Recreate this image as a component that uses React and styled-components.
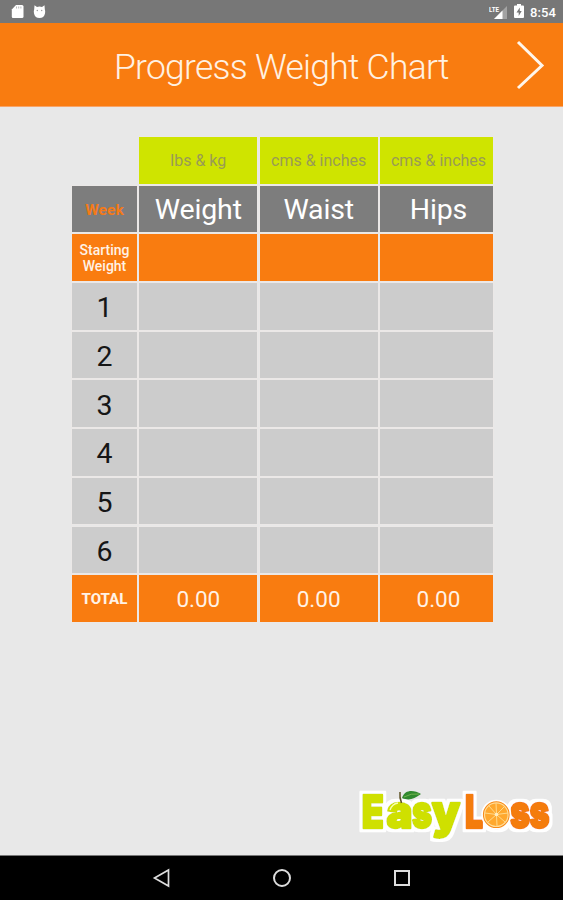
import React from "react";
import styled, { createGlobalStyle } from "styled-components";

const Global = createGlobalStyle`
  * { box-sizing: border-box; }
  body { margin: 0; background: #e8e8e8; font-family: Roboto, "Liberation Sans", sans-serif; }
`;

const Screen = styled.div`
  width: 563px;
  height: 900px;
  display: flex;
  flex-direction: column;
  background: #e8e8e8;
  overflow: hidden;
`;

const StatusBar = styled.div`
  height: 23px;
  flex: none;
  display: flex;
  align-items: center;
  justify-content: space-between;
  padding: 0 7px 0 11px;
  background: #777;
  color: #fff;
`;

const StatusGroup = styled.div`
  display: flex;
  align-items: center;
  gap: ${(p) => p.$gap}px;
`;

const Clock = styled.span`
  font-size: 13px;
  line-height: 23px;
  font-weight: 500;
  padding-top: 2px;
  letter-spacing: 0.1px;
`;

const Header = styled.header`
  height: 84px;
  flex: none;
  display: grid;
  grid-template-columns: 1fr auto 1fr;
  align-items: center;
  background: #f97c10;
  border-bottom: 1px solid #f8a468;
`;

const Title = styled.h1`
  grid-column: 2;
  margin: 5px 0 0;
  color: #fff1e2;
  font-size: 35.5px;
  letter-spacing: -0.75px;
  line-height: 42px;
  font-weight: 300;
  white-space: nowrap;
  width: 335px;
`;

const NextButton = styled.button`
  justify-self: end;
  margin-right: 17px;
  padding: 0;
  border: 0;
  background: none;
  display: flex;
`;

const Main = styled.main`
  flex: 1;
  display: flex;
  flex-direction: column;
  justify-content: space-between;
  padding: 30px 0 6px 72px;
`;

const Table = styled.div`
  display: grid;
  grid-template-columns: 65px 118px 118px 113px;
  grid-template-rows: repeat(10, 46.6px);
  column-gap: 2.33px;
  row-gap: 2.1px;
`;

const tones = {
  blank: "transparent",
  lime: "#cfe400",
  gray: "#7d7d7d",
  orange: "#f97c10",
  light: "#cccccc",
};

const Cell = styled.div`
  display: flex;
  align-items: center;
  justify-content: center;
  text-align: center;
  overflow: hidden;
  white-space: nowrap;
  background: ${(p) => tones[p.$tone]};
  box-shadow: ${(p) => (p.$tone === "blank" ? "none" : "0 0 0 1px #ebe8e7")};
  padding-left: ${(p) => (p.$last ? 4 : 0)}px;
`;

const Unit = styled.span`
  font-size: 16px;
  color: #999b55;
`;

const Heading = styled.span`
  font-size: 28.5px;
  letter-spacing: -0.15px;
  color: #fff;
  padding-top: 1px;
`;

const WeekLabel = styled.span`
  font-size: 15.5px;
  letter-spacing: 0.1px;
  font-weight: 700;
  color: #f47a18;
  padding-top: 2px;
`;

const StartLabel = styled.span`
  width: 60px;
  font-size: 14px;
  line-height: 16px;
  font-weight: 500;
  color: #fff2e6;
  white-space: normal;
`;

const WeekNumber = styled.span`
  font-size: 28.5px;
  color: #161616;
  padding-top: 3px;
`;

const TotalLabel = styled.span`
  font-size: 15px;
  font-weight: 800;
  color: #fff2e6;
  padding-top: 2px;
`;

const TotalValue = styled.span`
  font-size: 22.5px;
  color: #fff2e6;
  padding-top: 2px;
`;

const Brand = styled.div`
  align-self: flex-end;
  display: flex;
`;

const NavBar = styled.nav`
  height: 45px;
  flex: none;
  display: flex;
  justify-content: center;
  align-items: center;
  gap: 100px;
  border-top: 1px solid #777;
  background: #000;
`;

const NavButton = styled.button`
  width: 20px;
  height: 20px;
  padding: 0;
  border: 0;
  background: none;
  display: flex;
`;

const columns = [
  { unit: "lbs & kg", name: "Weight" },
  { unit: "cms & inches", name: "Waist" },
  { unit: "cms & inches", name: "Hips" },
];
const weeks = [1, 2, 3, 4, 5, 6];

function Row({ tone, labelTone = tone, label, render }) {
  return (
    <>
      <Cell $tone={labelTone}>{label}</Cell>
      {columns.map((column, i) => (
        <Cell key={i} $tone={tone} $last={i === 2}>
          {render ? render(column) : null}
        </Cell>
      ))}
    </>
  );
}

const LETTERS = [
  { c: "E", x: 5.8, len: 22, size: 46, lime: true },
  { c: "a", x: 30.5, len: 26, size: 46, lime: true },
  { c: "s", x: 56, len: 20, size: 46, lime: true },
  { c: "y", x: 76, len: 28, size: 46, lime: true },
  { c: "L", x: 109, len: 18, size: 46 },
  { c: "o", x: 129, len: 23, size: 40 },
  { c: "s", x: 154, len: 20, size: 46 },
  { c: "s", x: 173.5, len: 20, size: 46 },
];

function LogoLetter({ l }) {
  const color = l.lime ? "#cfe000" : "#f47b10";
  return (
    <text
      x={l.x}
      y="44.5"
      fontFamily="Inter, sans-serif"
      fontWeight="900"
      fontSize={l.size}
      textLength={l.len}
      lengthAdjust="spacingAndGlyphs"
      fill={color}
      stroke={color}
      strokeWidth="2.5"
      strokeLinejoin="round"
    >
      {l.c}
    </text>
  );
}

function Logo() {
  return (
    <svg width="207" height="66" viewBox="0 0 207 66" role="img" aria-label="EasyLoss">
      <defs>
        <filter id="halo" x="-5%" y="-15%" width="110%" height="130%">
          <feMorphology in="SourceAlpha" operator="dilate" radius="3" result="grown" />
          <feGaussianBlur in="grown" stdDeviation="0.6" result="soft" />
          <feFlood floodColor="#fff" />
          <feComposite in2="soft" operator="in" result="edge" />
          <feMerge>
            <feMergeNode in="edge" />
            <feMergeNode in="SourceGraphic" />
          </feMerge>
        </filter>
      </defs>
      <g filter="url(#halo)">
        {LETTERS.map((l, i) => <LogoLetter key={i} l={l} />)}
      </g>
      <circle cx="140.3" cy="31.7" r="14.2" fill="#f98a16" stroke="#fff" strokeWidth="1.6" />
      <circle cx="140.3" cy="31.7" r="11.8" fill="#ffa82e" stroke="#ffdc98" strokeWidth="1.2" />
      <path
        d="M140.5 31.5 L140 20 M140.5 31.5 L149 23 M140.5 31.5 L152 30 M140.5 31.5 L149 39 M140.5 31.5 L141 43 M140.5 31.5 L132 39 M140.5 31.5 L129 30 M140.5 31.5 L133 23"
        stroke="#ffd98a"
        strokeWidth="1"
      />
      <circle cx="140.5" cy="31.5" r="1.8" fill="#ffedc0" />
      <path d="M45.5 20 C44 16 43.5 13 44 9" fill="none" stroke="#5d5124" strokeWidth="1.5" />
      <path d="M46 15 C49 6 58 7 65 11 C58 16 53 18 46 15Z" fill="#31892f" />
      <path d="M48 14 Q55 10 63 11" fill="none" stroke="#83bf55" strokeWidth="0.8" />
      <path d="M34 27 Q36 21 42 20" fill="none" stroke="#f8ffb5" strokeWidth="1.3" />
    </svg>
  );
}

export default function App() {
  return (
    <Screen>
      <Global />
      <StatusBar>
        <StatusGroup $gap={9}>
          <svg width="13" height="15" viewBox="0 0 13 15">
            <path d="M5 1h6q1.5 0 1.5 1.5v10q0 1.5-1.5 1.5H2Q.8 14 .8 12.5V5.5Z" fill="#fff" />
            <path d="M5.5 2.5v2M7.7 2.5v2M9.9 2.5v2" stroke="#bbb" strokeWidth="1" />
          </svg>
          <svg width="13" height="15" viewBox="0 0 13 15">
            <path d="M1.5 1.2 4 3Q6.5 2 9 3l2.5-1.8.3 4Q12.5 7 12 9.5 11 14 6.5 14T1 9.5Q.5 7 1.2 5.2Z" fill="#fff" />
            <circle cx="4.3" cy="6.5" r=".7" fill="#999" />
            <circle cx="8.7" cy="6.5" r=".7" fill="#999" />
          </svg>
        </StatusGroup>
        <StatusGroup $gap={6}>
          <svg width="19" height="16" viewBox="0 0 19 16">
            <path d="M18 2v13H5Z" fill="#a3a3a3" />
            <path d="M13.5 6.5V15H5Z" fill="#fff" />
            <text x="0" y="7.5" fontSize="7" fontWeight="700" textLength="10" lengthAdjust="spacingAndGlyphs" fill="#fff" fontFamily="Roboto, sans-serif">LTE</text>
          </svg>
          <svg width="10" height="15" viewBox="0 0 10 15">
            <path d="M3 0h4v1.5h2q1 0 1 1V13q0 1-1 1H1q-1 0-1-1V2.5q0-1 1-1h2Z" fill="#fff" />
            <path d="M5.8 3.5 2.5 8.5h2.2v3.5L7.7 7H5.8Z" fill="#777" />
          </svg>
          <Clock>8:54</Clock>
        </StatusGroup>
      </StatusBar>
      <Header>
        <Title>Progress Weight Chart</Title>
        <NextButton aria-label="Next">
          <svg width="30" height="50" viewBox="0 0 30 50">
            <path d="M2 2 26 25.5 2 48" fill="none" stroke="#fff6ec" strokeWidth="3" />
          </svg>
        </NextButton>
      </Header>
      <Main>
        <Table>
          <Row tone="lime" labelTone="blank" render={(c) => <Unit>{c.unit}</Unit>} />
          <Row tone="gray" label={<WeekLabel>Week</WeekLabel>} render={(c) => <Heading>{c.name}</Heading>} />
          <Row tone="orange" label={<StartLabel>Starting Weight</StartLabel>} />
          {weeks.map((n) => (
            <Row key={n} tone="light" label={<WeekNumber>{n}</WeekNumber>} />
          ))}
          <Row tone="orange" label={<TotalLabel>TOTAL</TotalLabel>} render={() => <TotalValue>0.00</TotalValue>} />
        </Table>
        <Brand>
          <Logo />
        </Brand>
      </Main>
      <NavBar>
        <NavButton aria-label="Back">
          <svg width="20" height="20" viewBox="0 0 20 20">
            <path d="M16.5 2v16L2.5 10Z" fill="none" stroke="#ddd" strokeWidth="1.7" />
          </svg>
        </NavButton>
        <NavButton aria-label="Home">
          <svg width="20" height="20" viewBox="0 0 20 20">
            <circle cx="10" cy="10" r="8" fill="none" stroke="#ddd" strokeWidth="2" />
          </svg>
        </NavButton>
        <NavButton aria-label="Recent apps">
          <svg width="20" height="20" viewBox="0 0 20 20">
            <rect x="3" y="3" width="14" height="14" fill="none" stroke="#ddd" strokeWidth="2" />
          </svg>
        </NavButton>
      </NavBar>
    </Screen>
  );
}
